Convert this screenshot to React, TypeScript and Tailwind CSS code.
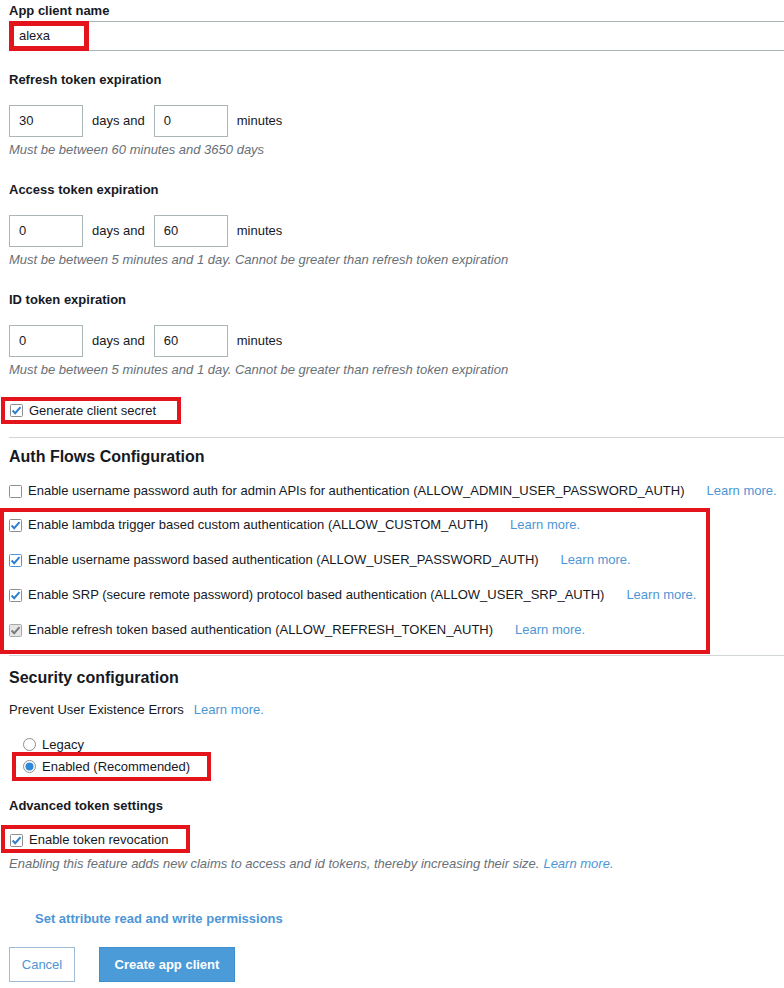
import React from "react";

const RED = "border-[#e3141c]";

function Check({ variant = "normal", checked = true }: { variant?: "normal" | "focus" | "disabled"; checked?: boolean }) {
  const border = variant === "focus" ? "#4d96d6" : variant === "disabled" ? "#a8a8a8" : "#8e8e8e";
  const bg = variant === "disabled" ? "#e6e6e6" : "#ffffff";
  const mark = variant === "disabled" ? "#7a7a7a" : "#2f7fd0";
  return (
    <svg width="13" height="13" viewBox="0 0 13 13" className="shrink-0">
      <rect x="0.5" y="0.5" width="12" height="12" rx="1" fill={bg} stroke={border} />
      {checked && <path d="M2.6 6.5 L5.2 9.2 L10.5 3.2" fill="none" stroke={mark} strokeWidth="2" />}
    </svg>
  );
}

function Radio({ checked }: { checked?: boolean }) {
  return (
    <svg width="13" height="13" viewBox="0 0 13 13" className="shrink-0">
      <circle cx="6.5" cy="6.5" r="6" fill="#fff" stroke="#8e8e8e" />
      {checked && <circle cx="6.5" cy="6.5" r="4" fill="#2f88d8" />}
    </svg>
  );
}

function Label({ children, className = "" }: { children: React.ReactNode; className?: string }) {
  return <div className={"h-[20px] flex items-center text-[13px] font-bold text-[#16191f] " + className}>{children}</div>;
}

function Heading({ children, className = "" }: { children: React.ReactNode; className?: string }) {
  return <div className={"h-[20px] flex items-center text-[16px] font-bold text-[#16191f] " + className}>{children}</div>;
}

function Num({ v }: { v: string }) {
  return (
    <div className="w-[74px] h-[32px] border border-[#aab7b8] flex items-center pl-[9px] text-[13px] text-[#16191f]">{v}</div>
  );
}

function Duration({ d, m }: { d: string; m: string }) {
  return (
    <div className="mt-[15px] h-[32px] flex items-center text-[13px] text-[#16191f]">
      <Num v={d} />
      <span className="ml-[9px] mr-[9px]">days and</span>
      <Num v={m} />
      <span className="ml-[9px]">minutes</span>
    </div>
  );
}

function Hint({ children, className = "" }: { children: React.ReactNode; className?: string }) {
  return <div className={"h-[18px] flex items-center text-[13px] italic text-[#687078] whitespace-nowrap " + className}>{children}</div>;
}

function Learn({ className = "" }: { className?: string }) {
  return <span className={"text-[#4d96d6] " + className}>Learn more.</span>;
}

function Flow({ text, variant = "normal", checked = true }: { text: string; variant?: "normal" | "focus" | "disabled"; checked?: boolean }) {
  return (
    <div className="h-[20px] flex items-center text-[13px] text-[#16191f] whitespace-nowrap">
      <Check variant={variant} checked={checked} />
      <span className="ml-[6px]">{text}</span>
      <Learn className="ml-[22px]" />
    </div>
  );
}

export default function App() {
  return (
    <div className="w-[784px] h-[988px] overflow-hidden bg-white pl-[9px] font-['Liberation_Sans',Arial,sans-serif]">
      <Label className="h-[21px]">App client name</Label>
      <div className="relative h-[30px] border border-[#aab7b8] flex items-center pl-[9px] text-[13px] text-[#16191f] -mr-[20px]">
        alexa
        <div className={"absolute left-[-1px] top-[-1px] w-[80px] h-[30px] border-[5px] " + RED}></div>
      </div>

      <Label className="mt-[19px]">Refresh token expiration</Label>
      <Duration d="30" m="0" />
      <Hint className="mt-[4px]">Must be between 60 minutes and 3650 days</Hint>

      <Label className="mt-[21px]">Access token expiration</Label>
      <Duration d="0" m="60" />
      <Hint className="mt-[4px]">Must be between 5 minutes and 1 day. Cannot be greater than refresh token expiration</Hint>

      <Label className="mt-[21px]">ID token expiration</Label>
      <Duration d="0" m="60" />
      <Hint className="mt-[4px]">Must be between 5 minutes and 1 day. Cannot be greater than refresh token expiration</Hint>

      <div className={"mt-[18px] -ml-[8px] w-[180px] h-[27px] border-[4px] flex items-center pl-[5px] text-[13px] text-[#16191f] " + RED}>
        <Check />
        <span className="ml-[6px]">Generate client secret</span>
      </div>

      <div className="mt-[13px] border-t border-[#d0d5d6]"></div>

      <Heading className="mt-[9px]">Auth Flows Configuration</Heading>

      <div className="mt-[14px]">
        <Flow checked={false} text="Enable username password auth for admin APIs for authentication (ALLOW_ADMIN_USER_PASSWORD_AUTH)" />
      </div>

      <div className={"mt-[7px] -ml-[9px] w-[710px] border-[4px] pl-[5px] pt-[3px] pb-[10px] flex flex-col gap-[15px] " + RED}>
        <Flow text="Enable lambda trigger based custom authentication (ALLOW_CUSTOM_AUTH)" />
        <Flow variant="focus" text="Enable username password based authentication (ALLOW_USER_PASSWORD_AUTH)" />
        <Flow text="Enable SRP (secure remote password) protocol based authentication (ALLOW_USER_SRP_AUTH)" />
        <Flow variant="disabled" text="Enable refresh token based authentication (ALLOW_REFRESH_TOKEN_AUTH)" />
      </div>

      <div className="mt-[1px] border-t border-[#d0d5d6]"></div>

      <Heading className="mt-[12px]">Security configuration</Heading>

      <div className="mt-[12px] h-[20px] flex items-center text-[13px] text-[#16191f]">
        <span>Prevent User Existence Errors</span>
        <Learn className="ml-[10px]" />
      </div>

      <div className="mt-[15px] h-[19px] flex items-center pl-[14px] text-[13px] text-[#16191f]">
        <Radio />
        <span className="ml-[6px]">Legacy</span>
      </div>
      <div className={"-mt-[2px] ml-[3px] w-[199px] h-[29px] border-[4px] flex items-center pl-[7px] text-[13px] text-[#16191f] " + RED}>
        <Radio checked />
        <span className="ml-[6px]">Enabled (Recommended)</span>
      </div>

      <Label className="mt-[15px]">Advanced token settings</Label>

      <div className={"mt-[9px] -ml-[8px] w-[189px] h-[28px] border-[4px] flex items-center pl-[5px] pt-[2px] text-[13px] text-[#16191f] " + RED}>
        <Check />
        <span className="ml-[6px]">Enable token revocation</span>
      </div>

      <Hint className="mt-[2px]">
        <span>Enabling this feature adds new claims to access and id tokens, thereby increasing their size.</span>
        <Learn className="ml-[4px]" />
      </Hint>

      <div className="mt-[36px] ml-[26px] h-[20px] flex items-center text-[13px] font-bold text-[#4d96d6]">
        Set attribute read and write permissions
      </div>

      <div className="mt-[18px] flex gap-[24px]">
        <button className="w-[66px] h-[35px] border border-[#9fbcd6] bg-white text-[13px] text-[#4d96d6]">Cancel</button>
        <button className="w-[136px] h-[35px] border border-[#3f8fcf] bg-[#4a9bd7] text-[13px] font-bold text-white">Create app client</button>
      </div>
    </div>
  );
}
